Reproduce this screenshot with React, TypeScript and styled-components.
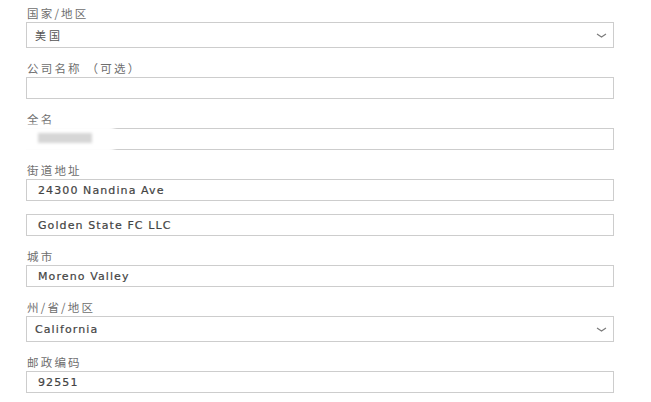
import React from "react";
import styled, { createGlobalStyle } from "styled-components";

const Global = createGlobalStyle`
  html, body { margin: 0; padding: 0; background: #ffffff; }
  body { font-family: "Liberation Sans", "Noto Sans CJK SC", Arial, sans-serif; }
`;

const Form = styled.div`
  width: 588px;
  padding: 6px 0 0 26px;
  display: flex;
  flex-direction: column;
  gap: 13px;
`;

const Field = styled.div`
  display: flex;
  flex-direction: column;
  gap: 2px;
`;

const Label = styled.div`
  font-family: "Noto Sans CJK SC", "Liberation Sans", sans-serif;
  font-size: 11.5px;
  line-height: 14px;
  height: 14px;
  letter-spacing: 2.2px;
  color: #6e6e6e;
  padding-left: 1px;
  white-space: nowrap;
`;

const Box = styled.div<{ $tall?: boolean }>`
  position: relative;
  box-sizing: border-box;
  height: ${(p) => (p.$tall ? 26 : 22)}px;
  border: 1px solid #cdcdcd;
  background: #ffffff;
  display: flex;
  align-items: center;
  padding: 0 10px 0 ${(p) => (p.$tall ? 8 : 11)}px;
`;

const Value = styled.span<{ $cjk?: boolean }>`
  font-family: ${(p) =>
    p.$cjk ? `"Noto Sans CJK SC", sans-serif` : `"DejaVu Sans", Verdana, sans-serif`};
  font-size: 11px;
  font-weight: 400;
  letter-spacing: ${(p) => (p.$cjk ? 3 : 1.1)}px;
  color: ${(p) => (p.$cjk ? "#555555" : "#444444")};
  -webkit-text-stroke: ${(p) => (p.$cjk ? "0px" : "0.2px #444444")};
  flex: 1;
  white-space: nowrap;
`;

const Chevron = styled.svg`
  width: 11px;
  height: 5px;
  margin-right: -4px;
  flex: none;
`;

const Redaction = styled.div`
  position: absolute;
  left: -8px;
  top: -4px;
  width: 95px;
  height: 28px;
  background: #ffffff;
  filter: blur(2px);
`;

const RedactionBar = styled.div`
  position: absolute;
  left: 11px;
  top: 4px;
  width: 54px;
  height: 10px;
  background: #d6d6d6;
  filter: blur(1.5px);
`;

const Arrow = () => (
  <Chevron viewBox="0 0 11 5">
    <polyline points="1,1 5.5,4 10,1" fill="none" stroke="#7a7a7a" strokeWidth="1.1" />
  </Chevron>
);

export default function App() {
  return (
    <>
      <Global />
      <Form>
        <Field>
          <Label>国家/地区</Label>
          <Box $tall>
            <Value $cjk>美国</Value>
            <Arrow />
          </Box>
        </Field>
        <Field>
          <Label>公司名称 （可选）</Label>
          <Box />
        </Field>
        <Field>
          <Label>全名</Label>
          <Box>
            <Redaction />
            <RedactionBar />
          </Box>
        </Field>
        <Field>
          <Label>街道地址</Label>
          <Box>
            <Value>24300 Nandina Ave</Value>
          </Box>
        </Field>
        <Field>
          <Box>
            <Value>Golden State FC LLC</Value>
          </Box>
        </Field>
        <Field>
          <Label>城市</Label>
          <Box>
            <Value>Moreno Valley</Value>
          </Box>
        </Field>
        <Field>
          <Label>州/省/地区</Label>
          <Box $tall>
            <Value>California</Value>
            <Arrow />
          </Box>
        </Field>
        <Field>
          <Label>邮政编码</Label>
          <Box>
            <Value>92551</Value>
          </Box>
        </Field>
      </Form>
    </>
  );
}
